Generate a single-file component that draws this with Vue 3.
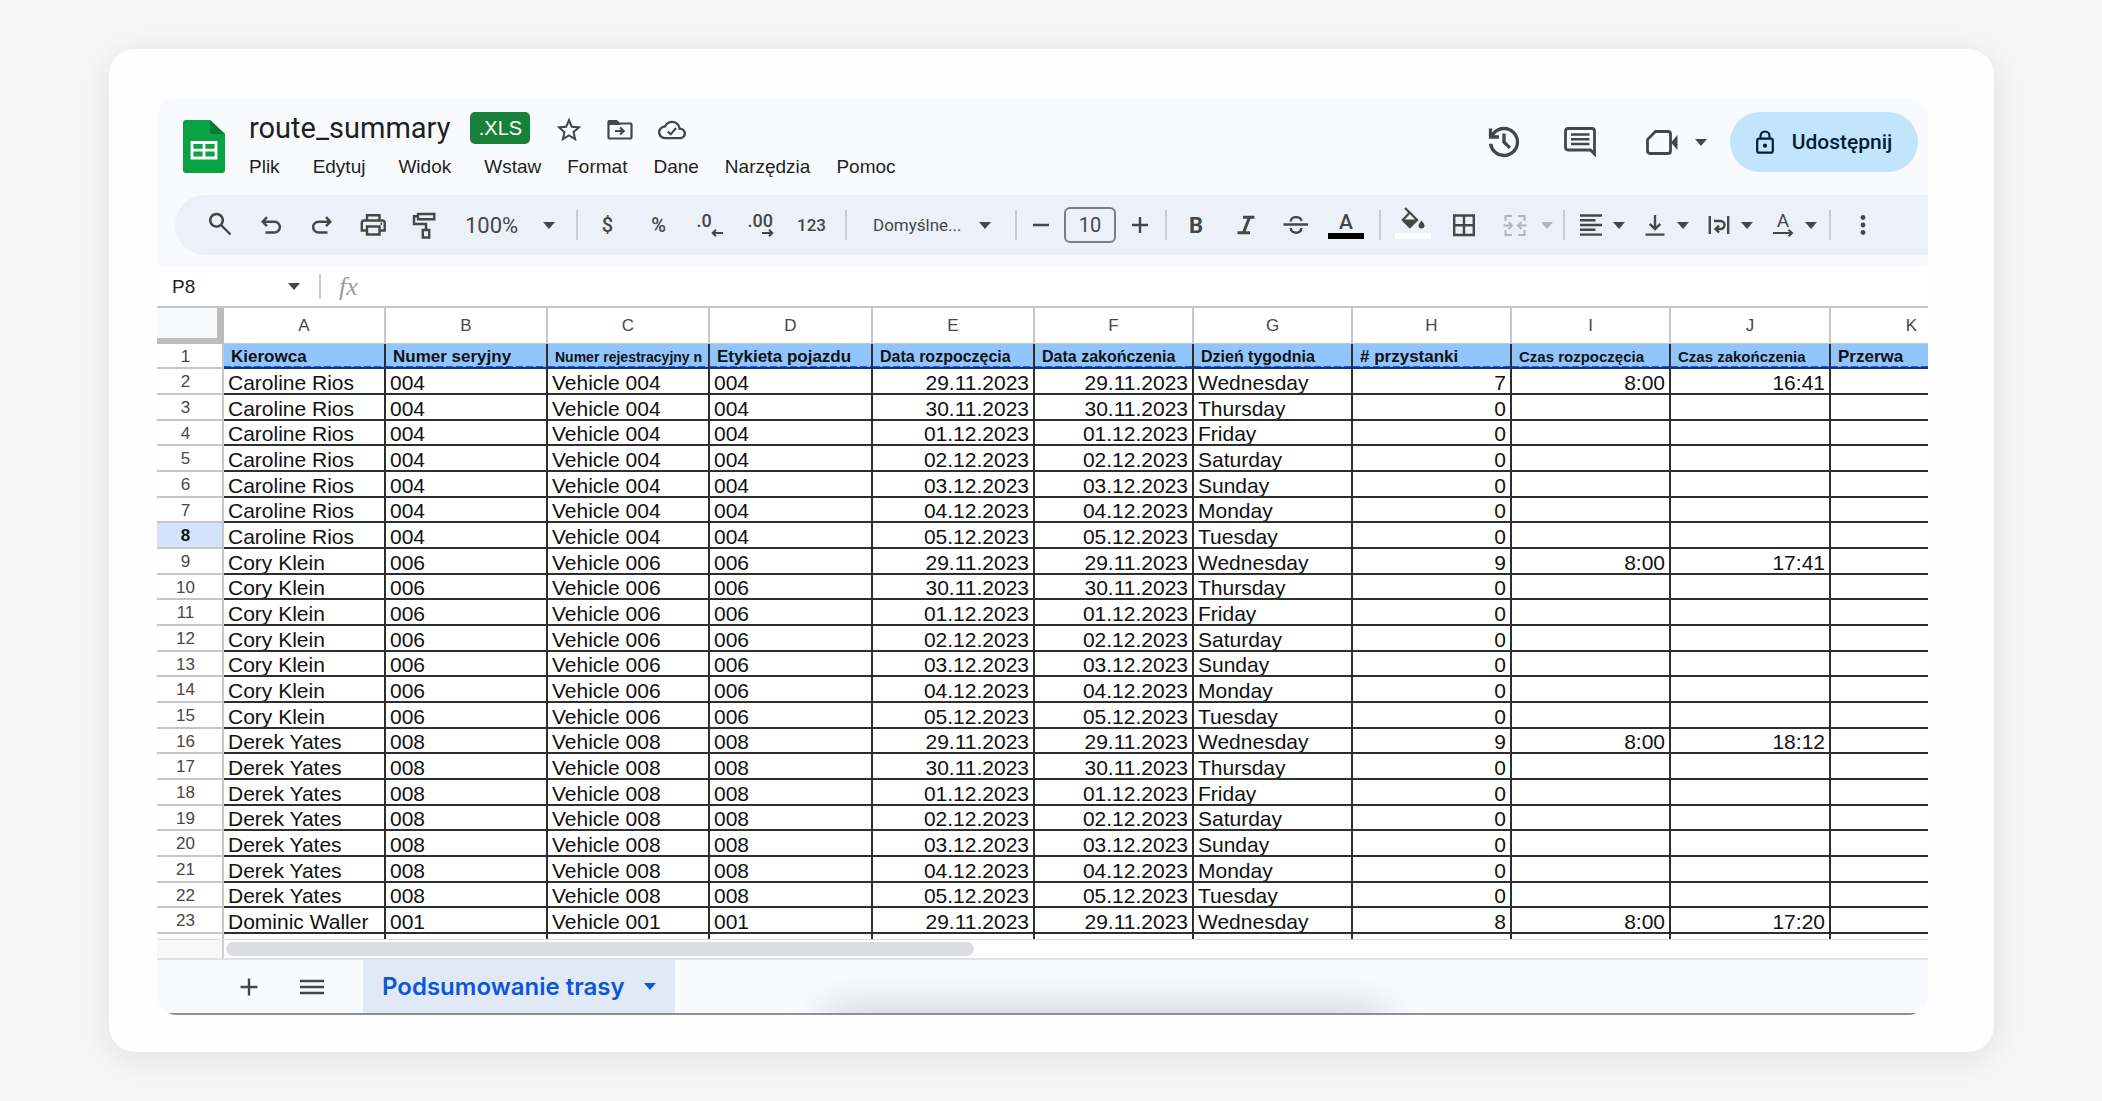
<template>
  <div class="page">
    <div class="card">
      <div class="sheet">
        <header class="top">
          <svg class="logo" viewBox="0 0 42 53">
            <path d="M3 0h24l15 14v36a3 3 0 0 1-3 3H3a3 3 0 0 1-3-3V3a3 3 0 0 1 3-3z" fill="#0aa344" />
            <path d="M27 0l15 14H29a2 2 0 0 1-2-2z" fill="#087a33" />
            <path d="M9 22.500h24v15.500H9zM21 22.500v15.500M9 30.200h24" fill="none" stroke="#fff" stroke-width="2.800" />
          </svg>

          <div class="doc">
            <div class="title-row">
              <h1 class="title">route_summary</h1>
              <span class="badge">.XLS</span>
              <button class="plain" aria-label="Oznacz gwiazdką">
                <svg width="26" height="26" viewBox="1.500 1.500 21 21" class="solid">
                  <path d="M22 9.240l-7.190-.620L12 2 9.190 8.630 2 9.240l5.460 4.730L5.820 21 12 17.270 18.180 21l-1.630-7.030zM12 15.400l-3.760 2.270 1-4.280-3.320-2.880 4.380-.380L12 6.100l1.710 4.040 4.380.380-3.320 2.880 1 4.280z" />
                </svg>
              </button>
              <button class="plain" aria-label="Przenieś">
                <svg width="26" height="26" viewBox="0 0 26 26" class="line">
                  <path d="M1.500 6v14.500q0 1 1 1h21q1 0 1-1V7.500q0-1-1-1H12L9.500 4H2.500q-1 0-1 1z" />
                  <path d="M2 4.500h7.500l2 2.500H2z" fill="#444746" />
                  <path d="M8 14h8.500M13 10.500l3.700 3.500-3.700 3.500" />
                </svg>
              </button>
              <button class="plain" aria-label="Stan dokumentu">
                <svg width="28" height="22" viewBox="0 3 24 18" class="solid">
                  <path d="M19.350 10.040C18.670 6.590 15.640 4 12 4 9.110 4 6.600 5.640 5.350 8.040 2.340 8.360 0 10.910 0 14c0 3.310 2.690 6 6 6h13c2.760 0 5-2.240 5-5 0-2.640-2.050-4.780-4.650-4.960zM19 18H6c-2.210 0-4-1.790-4-4 0-2.050 1.530-3.760 3.560-3.970l1.070-.110.500-.950C8.080 7.140 9.940 6 12 6c2.620 0 4.880 1.860 5.390 4.430l.300 1.500 1.530.110c1.560.100 2.780 1.410 2.780 2.960 0 1.650-1.350 3-3 3z" />
                  <path d="M8.300 13.200l2.600 2.500 4.600-5.400" fill="none" stroke="#444746" stroke-width="1.800" />
                </svg>
              </button>
            </div>
            <nav class="menu">
              <button v-for="item in menu" :key="item" class="menu-item">{{ item }}</button>
            </nav>
          </div>

          <div class="actions">
            <div class="action-pair">
              <button class="plain" aria-label="Historia">
                <svg width="32" height="32" viewBox="2.500 2.500 19 19" class="solid">
                  <path d="M12 21q-3.450 0-6.012-2.288T3.050 13H5.100q.350 2.600 2.312 4.300T12 19q2.925 0 4.962-2.038T19 12t-2.038-4.962T12 5q-1.725 0-3.225.800T6.250 8H9v2H3V4h2v2.350q1.275-1.600 3.112-2.475T12 3q1.875 0 3.512.712t2.850 1.925 1.925 2.850T21 12t-.713 3.512-1.925 2.850-2.850 1.925T12 21m2.800-4.800L11 12.400V7h2v4.600l3.200 3.200z" />
                </svg>
              </button>
              <button class="plain" aria-label="Komentarze">
                <svg width="32" height="32" viewBox="0 0 32 32" class="line">
                  <path d="M4 2.500h24q2.500 0 2.500 2.500v23l-4-4H4q-2.500 0-2.500-2.500V5q0-2.500 2.500-2.500z" stroke-width="2.800" />
                  <path d="M26 24h4.500v6z" fill="#444746" stroke="none" />
                  <path d="M7 8.500h18.500M7 13.300h18.500M7 18h18.500" stroke-width="2.600" />
                </svg>
              </button>
            </div>
            <button class="plain meet" aria-label="Rozmowa wideo">
              <svg width="32" height="32" viewBox="0 0 32 32" class="line">
                <path d="M9.500 5.500H22q2.500 0 2.500 2.500v17q0 2.500-2.500 2.500H4q-2.500 0-2.500-2.500V13.500z" stroke-width="2.800" />
                <path d="M25 16.500L31.500 9v15z" fill="#444746" stroke="none" />
              </svg>
              <svg class="caret" viewBox="0 0 12 7"><path d="M0 0h12L6 7z" /></svg>
            </button>
            <button class="share">
              <svg width="18" height="24" viewBox="0 0 18 24" fill="none" stroke="#001d35" stroke-width="2.200">
                <rect x="1.200" y="8.700" width="15.600" height="14" rx="2" />
                <path d="M4.500 8.500V6a4.500 4.500 0 0 1 9 0v2.500" />
                <circle cx="9" cy="15.700" r="1" />
              </svg>
              Udostępnij
            </button>
          </div>
        </header>

        <div class="toolbar">
          <div class="group">
            <button v-for="name in ['search', 'undo', 'redo', 'print', 'paint']" :key="name" class="tool" :aria-label="name">
              <svg class="icon" viewBox="0 0 28 28"><path :d="icons[name]" /></svg>
            </button>
          </div>
          <label class="picker zoom">
            <select aria-label="Powiększenie"><option>100%</option></select>
            <svg class="caret" viewBox="0 0 12 7"><path d="M0 0h12L6 7z" /></svg>
          </label>
          <span class="divider"></span>
          <div class="group formats">
            <button class="tool currency">$</button>
            <button class="tool currency">%</button>
            <button class="tool">
              <span class="decimal">
                <span>.0</span>
                <svg viewBox="0 0 12 8"><path d="M12 4H1.500M5 .800L1.700 4 5 7.200" /></svg>
              </span>
            </button>
            <button class="tool">
              <span class="decimal">
                <span>.00</span>
                <svg viewBox="0 0 12 8"><path d="M0 4h10.500M7 .800L10.300 4 7 7.200" /></svg>
              </span>
            </button>
            <button class="tool numeric">123</button>
          </div>
          <span class="divider"></span>
          <label class="picker font">
            <select aria-label="Czcionka"><option>Domyślne...</option></select>
            <svg class="caret" viewBox="0 0 12 7"><path d="M0 0h12L6 7z" /></svg>
          </label>
          <span class="divider"></span>
          <div class="group size">
            <button class="tool" aria-label="Zmniejsz">
              <svg class="icon" viewBox="0 0 28 28"><path d="M6 14h16" /></svg>
            </button>
            <input type="text" value="10" aria-label="Rozmiar czcionki">
            <button class="tool" aria-label="Zwiększ">
              <svg class="icon" viewBox="0 0 28 28"><path d="M6 14h16M14 6v16" /></svg>
            </button>
          </div>
          <span class="divider"></span>
          <div class="group styles">
            <button class="tool bold">B</button>
            <button class="tool" aria-label="Kursywa">
              <svg class="icon" viewBox="0 0 28 28"><path d="M11 6.300h11.500M5.500 21.700H18M17.500 6.300l-6 15.400" stroke-width="3" /></svg>
            </button>
            <button class="tool" aria-label="Przekreślenie">
              <svg class="icon" viewBox="0 0 28 28"><path :d="icons.strike" /></svg>
            </button>
            <button class="tool">
              <span class="swatch">
                <span class="letter">A</span>
                <i class="bar black"></i>
              </span>
            </button>
          </div>
          <span class="divider"></span>
          <div class="group cells">
            <button class="tool" aria-label="Kolor wypełnienia">
              <span class="swatch">
                <svg class="bucket" viewBox="0 0 28 24">
                  <path d="M6 2l5 5M10.800 6.500L3.800 14l7 7.300 7.300-7.300z" fill="none" stroke="#444746" stroke-width="2.200" />
                  <path d="M3.500 13.500h15l-7.700 8z" />
                  <path d="M22.500 14.500q3 3.600 3 5a3 3 0 0 1-6 0q0-1.400 3-5z" />
                </svg>
                <i class="bar"></i>
              </span>
            </button>
            <button class="tool" aria-label="Obramowanie">
              <svg class="icon" viewBox="0 0 28 28"><path :d="icons.borders" /></svg>
            </button>
            <button class="tool merge" disabled aria-label="Scal komórki">
              <svg class="icon" viewBox="0 0 28 28"><path :d="icons.merge" /></svg>
              <svg class="caret" viewBox="0 0 12 7"><path d="M0 0h12L6 7z" /></svg>
            </button>
          </div>
          <span class="divider"></span>
          <div class="group aligns">
            <button v-for="name in ['align', 'valign', 'wrap']" :key="name" class="tool split" :aria-label="name">
              <svg class="icon" viewBox="0 0 28 28"><path :d="icons[name]" /></svg>
              <svg class="caret" viewBox="0 0 12 7"><path d="M0 0h12L6 7z" /></svg>
            </button>
            <button class="tool split">
              <span class="rotate">
                <span>A</span>
                <svg viewBox="0 0 21 8"><path d="M0 4h18M15.500 .800L19 4l-3.500 3.200" /></svg>
              </span>
              <svg class="caret" viewBox="0 0 12 7"><path d="M0 0h12L6 7z" /></svg>
            </button>
          </div>
          <span class="divider"></span>
          <div class="group more">
            <button class="tool" aria-label="Więcej">
              <svg class="icon dots" viewBox="0 0 28 28">
                <circle cx="14" cy="6.500" r="2.400" /><circle cx="14" cy="14" r="2.400" /><circle cx="14" cy="21.500" r="2.400" />
              </svg>
            </button>
          </div>
        </div>

        <div class="formula">
          <label class="name-box">
            <input type="text" value="P8" aria-label="Pole nazwy">
            <svg class="caret" viewBox="0 0 12 7"><path d="M0 0h12L6 7z" /></svg>
          </label>
          <span class="divider"></span>
          <label class="fx" for="fx-input">fx</label>
          <input id="fx-input" class="fx-input" type="text">
        </div>

        <div class="grid">
          <table>
            <colgroup>
              <col class="col-num">
              <col v-for="col in columns" :key="col.letter" :class="'w' + col.width">
            </colgroup>
            <thead>
              <tr>
                <td class="corner"></td>
                <th v-for="col in columns" :key="col.letter" scope="col">{{ col.letter }}</th>
              </tr>
            </thead>
            <tbody>
              <tr class="labels">
                <th scope="row">1</th>
                <td v-for="col in columns" :key="col.letter" :class="'s' + col.size">{{ col.label }}</td>
              </tr>
              <tr v-for="(row, i) in rows" :key="i" :class="{ selected: i + 2 === 8 }">
                <th scope="row">{{ i + 2 }}</th>
                <td v-for="(cell, c) in row" :key="c" :class="{ right: columns[c].right }">{{ cell }}</td>
              </tr>
              <tr class="partial">
                <th></th>
                <td v-for="col in columns" :key="col.letter"></td>
              </tr>
            </tbody>
          </table>
        </div>

        <div class="scroll">
          <div class="scroll-stub"></div>
          <div class="scroll-track"><div class="scroll-thumb"></div></div>
        </div>

        <footer class="tabs">
          <button class="plain add" aria-label="Dodaj arkusz">
            <svg class="icon" viewBox="0 0 28 28"><path d="M5.500 14h17M14 5.500v17" /></svg>
          </button>
          <button class="plain all" aria-label="Wszystkie arkusze">
            <svg class="icon" viewBox="0 0 28 28"><path d="M2 8h24M2 14h24M2 20h24" /></svg>
          </button>
          <button class="tab">
            Podsumowanie trasy
            <svg class="caret" viewBox="0 0 12 7"><path d="M0 0h12L6 7z" /></svg>
          </button>
        </footer>
      </div>
    </div>
  </div>
</template>

<script setup>
const menu = ['Plik', 'Edytuj', 'Widok', 'Wstaw', 'Format', 'Dane', 'Narzędzia', 'Pomoc']

const icons = {
  search: 'M10.500 3a6.300 6.300 0 1 0 .010 0zM15 14l9.500 9.500',
  undo: 'M10 6.200L5.700 10.700l4.300 4.500M6 10.700h11.500a5.400 5.400 0 0 1 0 10.800H8.500',
  redo: 'M18 6.200l4.300 4.500-4.300 4.500M22 10.700H10.500a5.400 5.400 0 0 0 0 10.800h9',
  print: 'M8 9V4.200h12.500V9M8 19.500H2.800V12q0-2.500 2.500-2.500h17.900q2.500 0 2.500 2.500v7.500h-5.200M8 15.500h12.500v8H8zM21.500 12.800h1.500',
  paint: 'M8 3h16.300v5.300H8zM8 5.300H4v7.700h12v5.500M12.800 19h6.400v7.500h-6.400z',
  strike: 'M1.500 13.500H26M8.700 10.500C8.700 4.800 19.200 4.800 19.400 10M8.700 17C9 23.300 19.600 23.300 19.300 17',
  borders: 'M4.200 4.500h19.600v19.500H4.200zM14 4.500V24M4.200 14.200h19.600',
  merge: 'M11 5H4.500v5M4.500 19v5H11M17 5h6.500v5M23.500 19v5H17M2.500 14.500h8M7.500 11l3.500 3.500L7.500 18M25.500 14.500h-8M20.500 11L17 14.500l3.500 3.500',
  align: 'M3 4.500h22M3 9.300h15.500M3 14h22M3 18.800h15.500M3 23.600h22',
  valign: 'M4.500 23.600h19M14 4v14M8.700 12.800L14 18l5.300-5.200',
  wrap: 'M4.800 5v18M23.200 5v18M9 10h6.500a4 4 0 0 1 0 8H11M14 14.500L10.500 18l3.500 3.500'
}

const columns = [
  { letter: 'A', label: 'Kierowca', width: 162, size: 17 },
  { letter: 'B', label: 'Numer seryjny', width: 162, size: 17 },
  { letter: 'C', label: 'Numer rejestracyjny n', width: 162, size: 14 },
  { letter: 'D', label: 'Etykieta pojazdu', width: 163, size: 17 },
  { letter: 'E', label: 'Data rozpoczęcia', width: 162, size: 16, right: true },
  { letter: 'F', label: 'Data zakończenia', width: 159, size: 16, right: true },
  { letter: 'G', label: 'Dzień tygodnia', width: 159, size: 16 },
  { letter: 'H', label: '# przystanki', width: 159, size: 17, right: true },
  { letter: 'I', label: 'Czas rozpoczęcia', width: 159, size: 15, right: true },
  { letter: 'J', label: 'Czas zakończenia', width: 160, size: 15, right: true },
  { letter: 'K', label: 'Przerwa', width: 163, size: 17 }
]

const days = [
  ['29.11.2023', 'Wednesday'],
  ['30.11.2023', 'Thursday'],
  ['01.12.2023', 'Friday'],
  ['02.12.2023', 'Saturday'],
  ['03.12.2023', 'Sunday'],
  ['04.12.2023', 'Monday'],
  ['05.12.2023', 'Tuesday']
]

const drivers = [
  { name: 'Caroline Rios', id: '004', stops: 7, end: '16:41', days: 7 },
  { name: 'Cory Klein', id: '006', stops: 9, end: '17:41', days: 7 },
  { name: 'Derek Yates', id: '008', stops: 9, end: '18:12', days: 7 },
  { name: 'Dominic Waller', id: '001', stops: 8, end: '17:20', days: 1 }
]

// only the first day of each driver has any stops
const rows = drivers.flatMap((d) =>
  days.slice(0, d.days).map(([date, day], i) => [
    d.name, d.id, 'Vehicle ' + d.id, d.id, date, date, day,
    i === 0 ? d.stops : 0,
    i === 0 ? '8:00' : '',
    i === 0 ? d.end : '',
    ''
  ])
)
</script>

<style>
body {
  margin: 0;
  background: #f7f7f7;
}
</style>

<style scoped>
.page {
  box-sizing: border-box;
  min-height: 100vh;
  padding: 49px 108px 49px 109px;
  background: #f7f7f7;
  font-family: "Liberation Sans", Arial, sans-serif;
  color: #1f1f1f;
}

.card {
  padding: 49px 66px 37px 48px;
  background: #fefefe;
  border-radius: 26px;
  box-shadow: 0 6px 36px rgba(0, 0, 0, 0.1);
}

.sheet {
  overflow: hidden;
  background: #fff;
  border-radius: 20px;
}

button,
input,
select {
  box-sizing: border-box;
  margin: 0;
  padding: 0;
  border: 0;
  background: none;
  color: inherit;
  font: inherit;
}

button {
  display: flex;
  align-items: center;
  justify-content: center;
  flex: none;
}

svg {
  display: block;
  flex: none;
}

.solid {
  fill: #444746;
}

.line {
  fill: none;
  stroke: #444746;
  stroke-width: 2.2;
}

.icon {
  width: 28px;
  height: 28px;
  fill: none;
  stroke: #444746;
  stroke-width: 2.4;
}

.dots {
  fill: #444746;
  stroke: none;
}

.caret {
  width: 12px;
  height: 7px;
  fill: #444746;
}

.divider {
  flex: none;
  width: 2px;
  height: 30px;
  background: #c9ccd1;
}

/* header */
.top {
  display: flex;
  align-items: flex-start;
  padding: 14px 10px 16px 26px;
  background: #f8fafd;
}

.logo {
  width: 42px;
  height: 53px;
  margin: 8px 24px 0 0;
}

.title-row {
  display: flex;
  align-items: center;
  height: 32px;
}

.title {
  margin: 0 20px 0 0;
  font-family: Roboto, "Liberation Sans", sans-serif;
  font-size: 29px;
  font-weight: 400;
  line-height: 32px;
}

.badge {
  width: 60px;
  margin-right: 26px;
  border-radius: 5px;
  background: #188038;
  color: #fff;
  font-size: 20px;
  line-height: 32px;
  text-align: center;
}

.title-row .plain {
  margin-right: 25px;
  padding-top: 3px;
}

.menu {
  display: flex;
  margin-top: 11px;
}

.menu-item {
  margin-right: 26px;
  font-size: 19px;
  line-height: 24px;
}

.menu-item:nth-child(-n+3) {
  margin-right: 33px;
}

.actions {
  display: flex;
  align-items: center;
  height: 60px;
  margin-left: auto;
}

.action-pair {
  display: flex;
  gap: 44px;
  margin-right: 50px;
}

.meet {
  gap: 17px;
  margin-right: 23px;
}

.share {
  gap: 18px;
  width: 188px;
  height: 60px;
  border-radius: 30px;
  background: #c2e5fd;
  color: #001d35;
  font-family: Roboto, "Liberation Sans", sans-serif;
  font-size: 21px;
  font-weight: 500;
}

/* toolbar */
.toolbar {
  position: relative;
  display: flex;
  align-items: center;
  height: 60px;
  padding-left: 37px;
  background: #f8fafd;
  border-bottom: 12px solid #f8fafd;
  color: #444746;
  font-family: Roboto, "Liberation Sans", sans-serif;
  z-index: 0;
}

.toolbar::before {
  content: "";
  position: absolute;
  inset: 0 0 0 18px;
  border-radius: 30px 0 0 30px;
  background: #ecf1f9;
  z-index: -1;
}

.group {
  display: flex;
  align-items: center;
  flex: none;
}

.tool {
  width: 51px;
  height: 48px;
}

.picker {
  display: flex;
  align-items: center;
  flex: none;
}

.picker select {
  flex: 1;
  min-width: 0;
  appearance: none;
  outline: none;
}

.zoom {
  box-sizing: border-box;
  width: 127px;
  padding: 0 21px 0 16px;
  font-size: 22px;
}

.font {
  box-sizing: border-box;
  width: 168px;
  padding: 0 24px 0 26px;
  font-size: 17px;
}

.formats {
  padding: 0 8px 0 4px;
}

.currency {
  font-size: 20px;
  font-weight: 500;
}

.numeric {
  font-size: 17px;
  font-weight: 500;
}

.decimal {
  display: flex;
  flex-direction: column;
  width: 26px;
  font-size: 18px;
  font-weight: 500;
  line-height: 16px;
  text-align: left;
}

.decimal svg {
  align-self: flex-end;
  width: 12px;
  height: 8px;
}

.decimal svg,
.rotate svg {
  fill: none;
  stroke: #444746;
  stroke-width: 2;
}

.size {
  padding-right: 2px;
}

.size .tool {
  width: 47px;
}

.size input {
  width: 52px;
  height: 36px;
  border: 2px solid #7b7d80;
  border-radius: 6px;
  font-size: 20px;
  text-align: center;
}

.styles {
  padding: 0 8px 0 4px;
}

.styles .tool {
  width: 50px;
}

.bold {
  font-size: 22px;
  font-weight: 700;
}

.swatch {
  display: flex;
  flex-direction: column;
  align-items: center;
  justify-content: flex-end;
  height: 40px;
  font-size: 21px;
  font-weight: 500;
  line-height: 22px;
}

.bar {
  width: 36px;
  height: 6px;
  margin-bottom: 6px;
  background: #fff;
}

.black {
  background: #000;
}

.bucket {
  width: 28px;
  height: 24px;
  margin-bottom: 3px;
  fill: #444746;
}

.cells {
  padding: 0 7px 0 6px;
}

.merge {
  width: 67px;
  padding-left: 9px;
  gap: 12px;
}

.merge .icon {
  stroke: #b2b5ba;
  stroke-width: 2;
}

.merge .caret {
  fill: #b2b5ba;
}

.aligns {
  padding-right: 8px;
}

.split {
  width: 64px;
  gap: 8px;
  padding-left: 8px;
}

.rotate {
  display: flex;
  flex-direction: column;
  align-items: center;
  width: 28px;
  font-size: 19px;
  line-height: 16px;
}

.rotate svg {
  width: 21px;
  height: 8px;
}

.more {
  padding-left: 6px;
}

/* name box and formula */
.formula {
  display: flex;
  align-items: center;
  height: 39px;
  border-bottom: 2px solid #c4c5c6;
}

.formula .divider {
  height: 25px;
}

.name-box {
  display: flex;
  align-items: center;
  box-sizing: border-box;
  width: 162px;
  padding: 0 19px 0 15px;
  font-size: 19px;
}

.name-box input {
  flex: 1;
  min-width: 0;
}

.fx {
  padding: 0 18px;
  color: #9a9c9e;
  font-family: "Liberation Serif", "Times New Roman", serif;
  font-size: 26px;
  font-style: italic;
}

.fx-input {
  flex: 1;
  font-size: 19px;
}

/* grid */
.grid {
  overflow: hidden;
  border-bottom: 1px solid #dcdcdc;
}

table {
  width: 0;
  border-collapse: separate;
  border-spacing: 0;
  table-layout: fixed;
}

.col-num {
  width: 67px;
}

.w159 {
  width: 159px;
}

.w160 {
  width: 160px;
}

.w162 {
  width: 162px;
}

.w163 {
  width: 163px;
}

th,
td {
  box-sizing: border-box;
  height: 26px;
  padding: 0 4px;
  border: 0 solid #2e2e2e;
  border-width: 0 2px 2px 0;
  overflow: hidden;
  white-space: nowrap;
}

tbody tr:nth-child(3n+1) > * {
  height: 25px;
}

tbody td {
  color: #111;
  font-size: 21px;
  line-height: 20px;
  text-align: left;
  vertical-align: bottom;
}

th {
  border-color: #c6c6c6;
  color: #484848;
  font-size: 17px;
  font-weight: 400;
  line-height: 20px;
  text-align: center;
}

thead th,
.corner {
  height: 36px;
  border-bottom-width: 1px;
}

.corner {
  border: solid #bcbcbc;
  border-width: 0 7px 6px 0;
  background: #f8f9fa;
}

tbody th {
  padding: 2px 12px 0 4px;
}

.labels td {
  padding: 0 7px;
  border-bottom-color: #14327e;
  background: repeating-linear-gradient(90deg, #1a5ae0 0 7px, #7fb4f4 7px 10px) bottom / 100% 1px no-repeat #90c6fd;
  font-weight: 700;
}

.labels .s17 {
  font-size: 17px;
}

.labels .s16 {
  font-size: 16px;
}

.labels .s15 {
  font-size: 15px;
}

.labels .s14 {
  font-size: 14px;
}

td.right {
  text-align: right;
}

.selected th {
  background: #d3e3fd;
  color: #111;
  font-weight: 700;
}

tbody .partial > * {
  height: 5px;
  border-bottom: 0;
}

/* scroll bar and sheet tabs */
.scroll {
  display: flex;
  height: 18px;
  border-bottom: 2px solid #e2e3e4;
}

.scroll-stub {
  box-sizing: border-box;
  width: 67px;
  border-right: 2px solid #d0d0d0;
  background: #f8f8f8;
}

.scroll-track {
  flex: 1;
  padding: 2px;
}

.scroll-thumb {
  width: 44%;
  height: 14px;
  border-radius: 7px;
  background: #dadce0;
}

.tabs {
  position: relative;
  display: flex;
  align-items: center;
  height: 53px;
  overflow: hidden;
  border-bottom: 2px solid #8e9093;
  background: #f8fafd;
}

.tabs::after {
  content: "";
  position: absolute;
  top: 100%;
  left: 38%;
  right: 31%;
  height: 20px;
  box-shadow: 0 4px 44px 4px rgba(0, 0, 0, 0.24);
}

.add {
  margin: 0 35px 0 78px;
}

.all {
  margin-right: 37px;
}

.tab {
  gap: 19px;
  height: 53px;
  padding: 0 19px;
  background: #e1e9f7;
  color: #0b57d9;
  font-family: Inter, "Liberation Sans", sans-serif;
  font-size: 24px;
  font-weight: 600;
}

.tab .caret {
  fill: #0b57d9;
}
</style>
